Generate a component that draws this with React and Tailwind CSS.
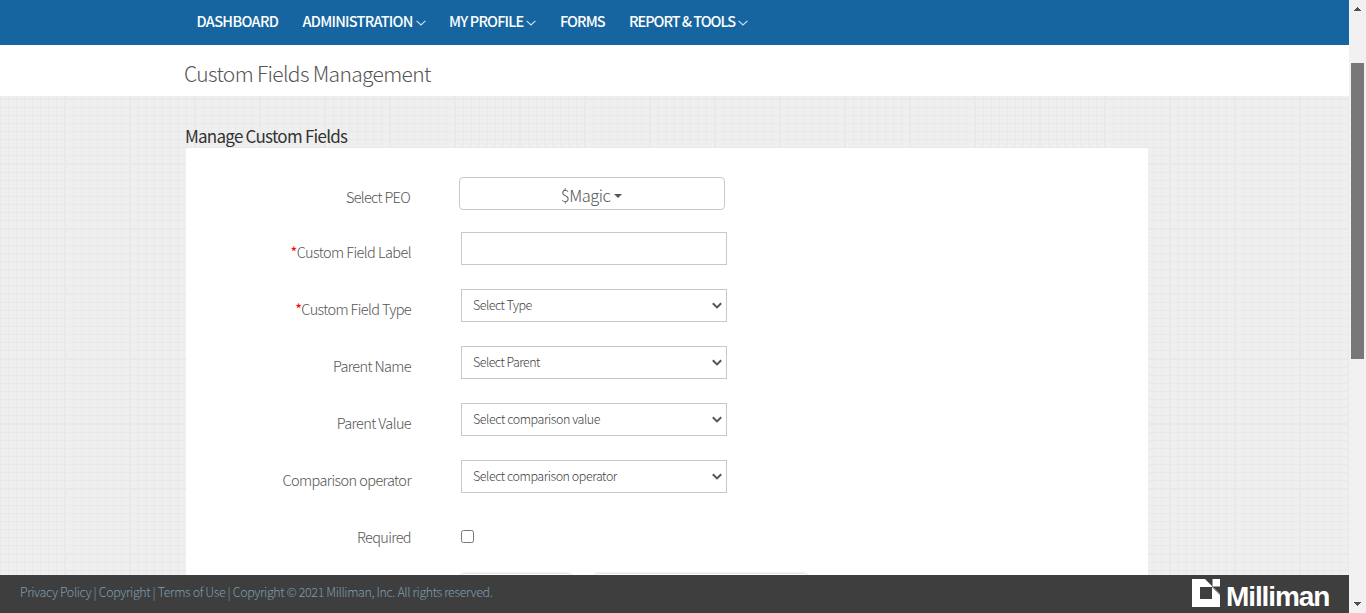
function Grid({ children }) {
  return (
    <div className="relative flex min-h-0 flex-1 flex-col overflow-hidden bg-[#efefef] pl-[185px]">
      <svg className="absolute inset-0 h-full w-full" aria-hidden="true">
        <defs>
          <pattern id="graph" width="65" height="65" y="3" patternUnits="userSpaceOnUse">
            <path
              d="M0 0h1v65h-1zM64 0h1v65h-1zM0 0h65v1h-65zM0 64h65v1h-65zM8 0h1v65h-1zM16 0h1v65h-1zM24 0h1v65h-1zM32 0h1v65h-1zM40 0h1v65h-1zM48 0h1v65h-1zM56 0h1v65h-1zM0 8h65v1h-65zM0 16h65v1h-65zM0 24h65v1h-65zM0 32h65v1h-65zM0 40h65v1h-65zM0 48h65v1h-65zM0 56h65v1h-65z"
              fill="#e9e9e9"
              shapeRendering="crispEdges"
            />
          </pattern>
        </defs>
        <rect width="100%" height="100%" fill="url(#graph)" />
      </svg>
      {children}
    </div>
  );
}

function NavItem({ label, menu, className }) {
  return (
    <a className={"flex items-center whitespace-nowrap " + className}>
      <span>{label}</span>
      {menu && (
        <svg className="mt-[4px] ml-[3px] h-[6px] w-[10px]" viewBox="0 0 10 6" fill="none" stroke="#d5e3ee" strokeWidth="1.1">
          <path d="M.6.8 5 5 9.4.8" />
        </svg>
      )}
    </a>
  );
}

function Row({ label, required, track, children }) {
  return (
    <div className="flex h-[57px] items-start">
      <label className={"mt-[8px] w-[225px] text-right text-[14.5px] leading-6 whitespace-nowrap " + track}>
        {required && <span className="font-normal text-[#f00]">*</span>}
        {label}
      </label>
      <div className="ml-[50px] flex">{children}</div>
    </div>
  );
}

function Select({ text, track }) {
  return (
    <div className="flex h-[33px] w-[266px] items-center justify-between border border-[#c8c8c8] bg-white pr-[4px] pl-[11px] text-[12.5px] text-[#444]">
      <span className={"mb-[1px] whitespace-nowrap " + track}>{text}</span>
      <svg className="h-[7px] w-[10px]" viewBox="0 0 10 7" fill="none" stroke="#555" strokeWidth="2">
        <path d="M.8 1.2 5 5.4 9.2 1.2" />
      </svg>
    </div>
  );
}

export default function App() {
  return (
    <div className="flex h-[613px] w-[1366px] overflow-hidden bg-white font-['Noto_Sans_CJK_SC',sans-serif] font-light text-[#555]">
      <div className="flex min-w-0 flex-1 flex-col">
        <nav className="flex h-[45px] items-start bg-[#1665a0] pt-[9px] pl-[196.5px] text-[14.5px] leading-6 font-medium text-white">
          <NavItem label="DASHBOARD" className="w-[106px] tracking-[-0.65px]" />
          <NavItem label="ADMINISTRATION" menu className="w-[146.500px] tracking-[-0.74px]" />
          <NavItem label="MY PROFILE" menu className="w-[111px] tracking-[-0.83px]" />
          <NavItem label="FORMS" className="w-[69px] tracking-[-0.95px]" />
          <NavItem label="REPORT & TOOLS" menu className="tracking-[-1.02px]" />
        </nav>
        <header className="h-[51px] bg-white pt-[12px] pl-[184px]">
          <h1 className="text-[21px] leading-8 font-light tracking-[-0.65px]">Custom Fields Management</h1>
        </header>
        <Grid>
          <h2 className="relative h-[52px] pt-[28px] text-[17px] leading-6 font-normal tracking-[-0.75px] text-[#333]">
            Manage Custom Fields
          </h2>
          <main className="relative ml-px flex h-[600px] w-[962px] flex-col bg-white pt-[29px]">
            <div className="flex h-[55px] items-start">
              <label className="mt-[8px] w-[224px] text-right text-[14.5px] leading-6 tracking-[-0.7px]">Select PEO</label>
              <button className="ml-[49px] flex h-[33px] w-[266px] items-center justify-center rounded-[4px] border border-[#c8c8c8] bg-white pt-[4px] pr-px text-[16.5px] tracking-[-0.5px]">
                $Magic
                <svg className="ml-[4px] h-[4px] w-[8px]" viewBox="0 0 8 4" fill="#555"><path d="M0 0h8L4 4z" /></svg>
              </button>
            </div>
            <Row label="Custom Field Label" required track="tracking-[-0.57px]">
              <div className="h-[33px] w-[266px] border border-[#c8c8c8] bg-white" />
            </Row>
            <Row label="Custom Field Type" required track="tracking-[-0.62px]">
              <Select text="Select Type" track="tracking-[-0.53px]" />
            </Row>
            <Row label="Parent Name" track="tracking-[-0.63px]">
              <Select text="Select Parent" track="tracking-[-0.55px]" />
            </Row>
            <Row label="Parent Value" track="tracking-[-0.62px]">
              <Select text="Select comparison value" track="tracking-[-0.44px]" />
            </Row>
            <Row label="Comparison operator" track="tracking-[-0.59px]">
              <Select text="Select comparison operator" track="tracking-[-0.46px]" />
            </Row>
            <Row label="Required" track="tracking-[-0.65px]">
              <span className="mt-[13px] size-[13px] rounded-[2.5px] border border-[#767676] bg-white" />
            </Row>
            <div className="ml-[275px] flex gap-[24px]">
              <div className="h-[34px] w-[110px] rounded-[3px] bg-white shadow-[0_0_3px_rgba(0,0,0,.3)]" />
              <div className="h-[34px] w-[212px] rounded-[3px] bg-white shadow-[0_0_3px_rgba(0,0,0,.3)]" />
            </div>
          </main>
        </Grid>
        <footer className="flex h-[38px] shrink-0 items-start justify-between bg-[#3e3e3e] pr-[20px] pl-[20px]">
          <p className="mt-[5px] text-[12.5px] leading-6 tracking-[-0.41px] whitespace-nowrap text-[#7d9dae]">
            Privacy Policy | Copyright | Terms of Use | Copyright © 2021 Milliman, Inc. All rights reserved.
          </p>
          <div className="mt-[4px] flex items-start text-white">
            <svg className="h-[28px] w-[28px]" viewBox="0 0 28 28">
              <path fillRule="evenodd" fill="#fff" d="M0 0h13l7 7v1H8v12h12V8l8 8v12H0z" />
              <path fill="#fff" d="M20.500 0H28v7.500h-7.500z" />
              <path d="M13 0l7.500 7.500L28 15" stroke="#999" strokeWidth=".8" fill="none" />
            </svg>
            <span className="ml-[6px] w-[103px] font-['Liberation_Sans',sans-serif] text-[28px] leading-[36px] font-bold tracking-[-1.1px]">Milliman</span>
          </div>
        </footer>
      </div>
      <aside className="flex w-[17px] shrink-0 flex-col items-center bg-[#f1f1f1] pr-px">
        <svg className="mt-[7px] h-[4px] w-[7px]" viewBox="0 0 7 4" fill="#505050" shapeRendering="crispEdges"><path d="M0 4h7V3H6V2H5V1H4V0H3v1H2v1H1v1H0z" /></svg>
        <div className="mt-[52px] h-[296px] w-[13px] bg-[#787878]" />
        <svg className="mt-[243px] h-[4px] w-[7px]" viewBox="0 0 7 4" fill="#505050" shapeRendering="crispEdges"><path d="M0 0h7v1H6v1H5v1H4v1H3V3H2V2H1V1H0z" /></svg>
      </aside>
    </div>
  );
}
